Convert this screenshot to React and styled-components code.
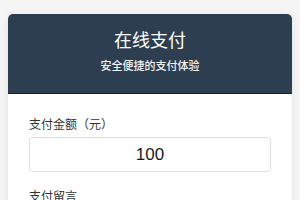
import React from 'react'
import styled, { createGlobalStyle } from 'styled-components'

const GlobalStyle = createGlobalStyle`
body {
  margin: 0;
  background: #f5f5f5;
  font-family: "Noto Sans CJK SC", "Noto Sans", sans-serif;
}
`

const Page = styled.div`
padding: 14px 8px;
`

const Card = styled.div`
background: #fff;
border-radius: 5px;
box-shadow: 0 2px 8px rgba(0, 0, 0, 0.08);
overflow: hidden;
`

const Header = styled.div`
background: #2c3e50;
border-bottom: 1px solid #16202b;
height: 80px;
box-sizing: border-box;
padding-top: 12px;
text-align: center;
color: #fff;
`

const Title = styled.h1`
font-size: 18px;
font-weight: 400;
line-height: 26px;
margin: 0;
`

const Subtitle = styled.p`
font-size: 11px;
font-weight: 500;
line-height: 16px;
margin: 5px 0 0;
color: #f2f4f6;
`

const Body = styled.div`
padding: 21px 21px 20px;
`

const Field = styled.div`
margin-bottom: 15px;
`

const Label = styled.label`
display: block;
font-size: 12px;
line-height: 17px;
color: #333;
margin-bottom: 5px;
`

const Input = styled.input`
display: block;
width: 100%;
box-sizing: border-box;
height: 35px;
border: 1px solid #dcdfe4;
border-radius: 3px;
text-align: center;
font-family: "Liberation Sans", Arial, sans-serif;
font-size: 17px;
color: #1a1a1a;
outline: none;
`

export default function App() {
  return (
    <>
      <GlobalStyle />
      <Page>
        <Card>
          <Header>
            <Title>在线支付</Title>
            <Subtitle>安全便捷的支付体验</Subtitle>
          </Header>
          <Body>
            <Field>
              <Label>支付金额（元）</Label>
              <Input defaultValue="100" />
            </Field>
            <Field>
              <Label>支付留言</Label>
              <Input placeholder="" />
            </Field>
          </Body>
        </Card>
      </Page>
    </>
  )
}
